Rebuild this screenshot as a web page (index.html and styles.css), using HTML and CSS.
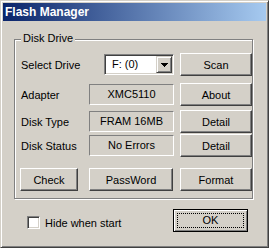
FILE: index.html
```html
<!DOCTYPE html>
<html lang="en">
<head>
    <meta charset="UTF-8">
    <title>Flash Manager</title>
    <link rel="stylesheet" href="styles.css">
</head>
<body>
    <div class="window">
        <div class="titlebar">Flash Manager</div>

        <div class="group">
            <div class="group-title">Disk Drive</div>

            <div class="row row-first">
                <span class="label">Select Drive</span>
                <div class="combo">
                    <span class="combo-text">F: (0)</span>
                    <span class="combo-btn">
                        <svg width="7" height="4" viewBox="0 0 7 4">
                            <rect x="0" y="0" width="7" height="1"/>
                            <rect x="1" y="1" width="5" height="1"/>
                            <rect x="2" y="2" width="3" height="1"/>
                            <rect x="3" y="3" width="1" height="1"/>
                        </svg>
                    </span>
                </div>
                <button class="btn">Scan</button>
            </div>

            <div class="row row-adapter">
                <span class="label">Adapter</span>
                <div class="field">XMC5110</div>
                <button class="btn">About</button>
            </div>

            <div class="row row-type">
                <span class="label">Disk Type</span>
                <div class="field">FRAM 16MB</div>
                <button class="btn">Detail</button>
            </div>

            <div class="row row-status">
                <span class="label">Disk Status</span>
                <div class="field">No Errors</div>
                <button class="btn">Detail</button>
            </div>

            <div class="row row-actions">
                <button class="btn btn-check">Check</button>
                <button class="btn btn-pass">PassWord</button>
                <button class="btn">Format</button>
            </div>
        </div>

        <div class="footer">
            <label class="check"><span class="box"></span>Hide when start</label>
            <button class="btn btn-default"><span class="focus">OK</span></button>
        </div>
    </div>
</body>
</html>
```

FILE: styles.css
```css
* {
    box-sizing: border-box;
}
body {
    margin: 0;
    font-family: "Liberation Sans", Arial, sans-serif;
    font-size: 11px;
    color: #000;
}
.window {
    width: 269px;
    height: 248px;
    background: #d4d0c8;
    border: 1px solid;
    border-color: #d4d0c8 #404040 #404040 #d4d0c8;
    box-shadow: inset 1px 1px #fff, inset -1px -1px #808080;
    padding: 2px;
}
.titlebar {
    height: 18px;
    line-height: 18px;
    padding-left: 2px;
    background: linear-gradient(to right, #0a246a, #a6caf0);
    color: #fff;
    font-weight: bold;
    font-size: 12px;
}

/* group box */
.group {
    margin: 18px 0 0 11px;
    width: 239px;
    height: 160px;
    border: 1px solid #808080;
    box-shadow: 1px 1px #fff, inset 1px 1px #fff;
    padding: 0 6px;
}
.group-title {
    width: max-content;
    margin-top: -8px;
    padding: 0 2px;
    line-height: 13px;
    background: #d4d0c8;
}
.row {
    display: grid;
    grid-template-columns: 62px 85px 72px;
    column-gap: 6px;
    align-items: center;
    height: 23px;
}
.row-first { margin-top: 8px; }
.row-adapter { margin-top: 7px; }
.row-type { margin-top: 4px; }
.row-status { margin-top: 1px; }
.row-actions { margin-top: 11px; }

.label {
    white-space: nowrap;
}
.field {
    height: 21px;
    line-height: 19px;
    text-align: center;
    border: 1px solid;
    border-color: #808080 #fff #fff #808080;
}

/* combo box */
.combo {
    justify-self: end;
    width: 70px;
    height: 21px;
    display: flex;
    border: 1px solid;
    border-color: #808080 #fff #fff #808080;
    padding: 1px;
    box-shadow: inset 1px 1px #404040, inset -1px -1px #d4d0c8;
    background: #fff;
}
.combo-text {
    flex: 1;
    padding-left: 6px;
    line-height: 17px;
}
.combo-btn {
    width: 16px;
    height: 17px;
    display: flex;
    align-items: center;
    justify-content: center;
    background: #d4d0c8;
    border: 1px solid;
    border-color: #d4d0c8 #404040 #404040 #d4d0c8;
    box-shadow: inset 1px 1px #fff, inset -1px -1px #808080;
}
.combo-btn svg {
    display: block;
    shape-rendering: crispEdges;
}

/* buttons */
.btn {
    font: inherit;
    color: #000;
    height: 23px;
    padding: 0;
    background: #d4d0c8;
    border: 1px solid;
    border-color: #fff #404040 #404040 #fff;
    box-shadow: inset -1px -1px #808080;
}
.btn-check {
    width: 58px;
    margin-left: -1px;
}
.btn-pass {
    width: 84px;
}
.btn-default {
    width: 75px;
    margin-left: auto;
    margin-right: 18px;
    border: 1px solid #000;
    box-shadow: inset 1px 1px #fff, inset -1px -1px #808080;
}
.focus {
    display: block;
    margin: 3px;
    height: 15px;
    line-height: 13px;
    border: 1px dotted #000;
}

/* footer */
.footer {
    display: flex;
    align-items: flex-start;
    margin-top: 10px;
    padding-left: 24px;
}
.check {
    display: flex;
    align-items: center;
    gap: 5px;
    margin-top: 7px;
    height: 13px;
}
.box {
    width: 13px;
    height: 13px;
    background: #fff;
    border: 1px solid;
    border-color: #808080 #fff #fff #808080;
    box-shadow: inset 1px 1px #404040, inset -1px -1px #d4d0c8;
}
```
